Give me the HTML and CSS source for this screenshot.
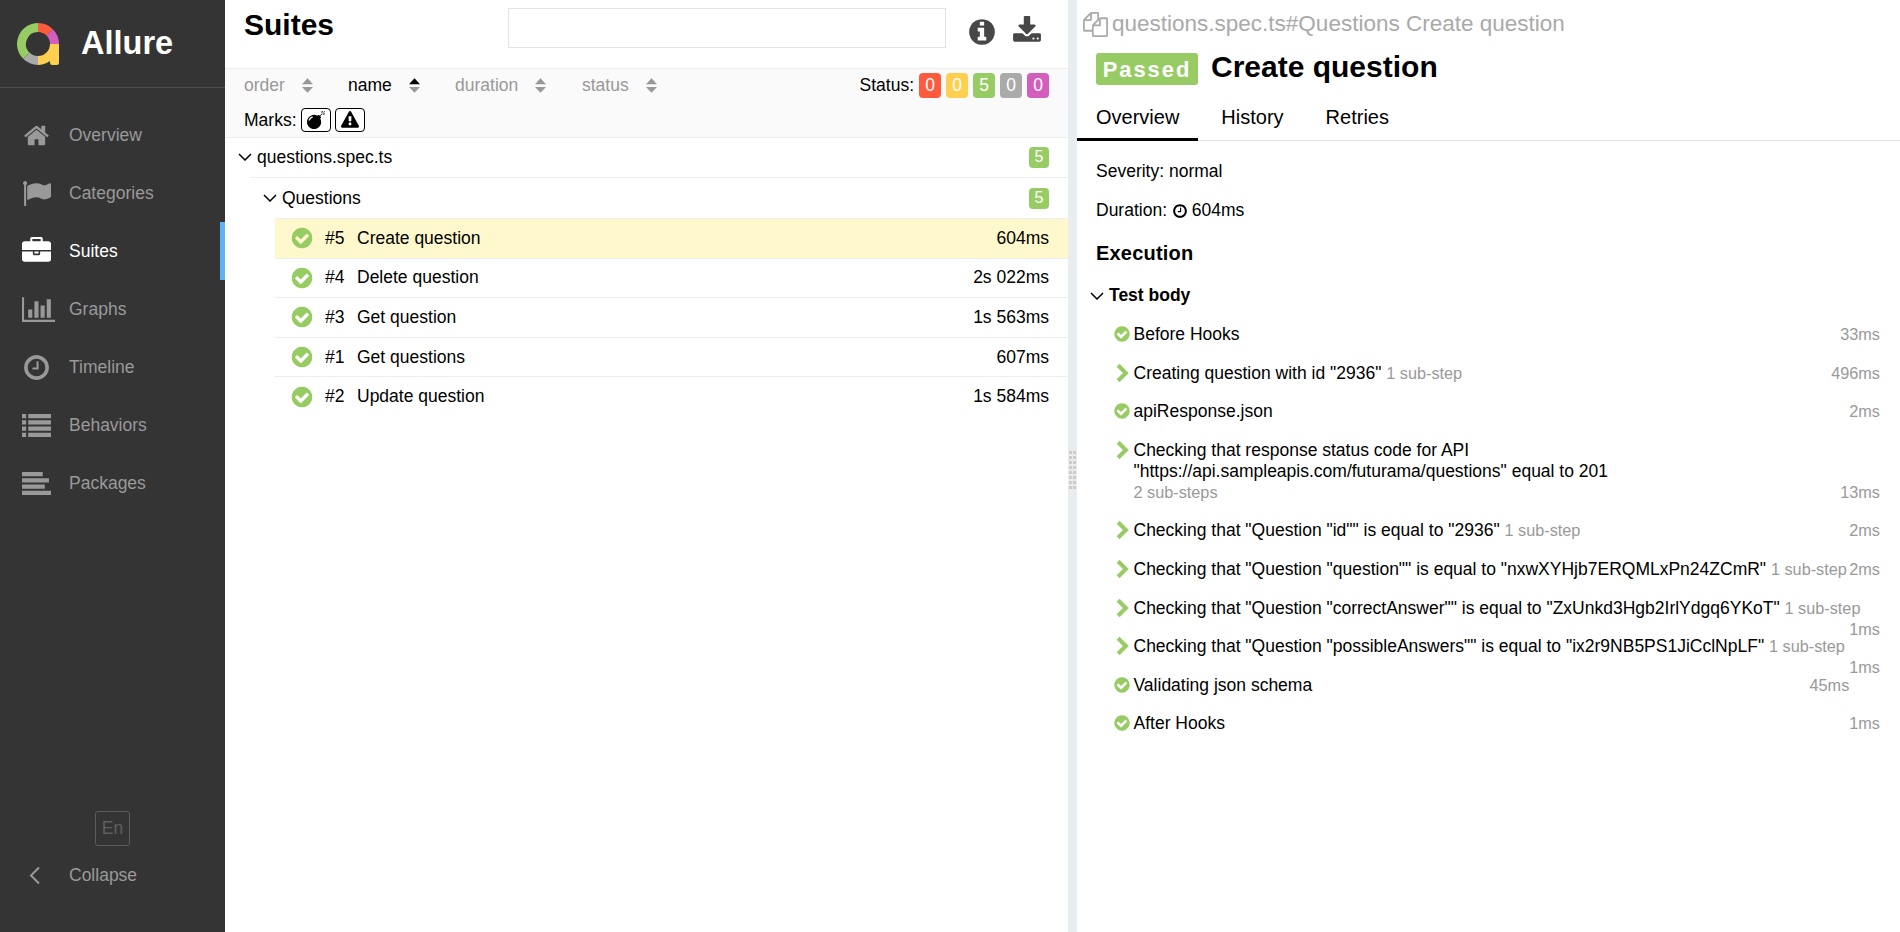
FILE: index.html
```html
<!DOCTYPE html>
<html lang="en">
<head>
    <meta charset="UTF-8">
    <title>Allure Report</title>
    <link rel="stylesheet" href="styles.css">
</head>
<body>
    <svg class="defs">
        <symbol id="i-check" viewBox="0 0 1792 1792"><path d="M1412 734q0-28-18-46l-91-90q-19-19-45-19t-45 19l-408 407-226-226q-19-19-45-19t-45 19l-91 90q-18 18-18 46 0 27 18 45l362 362q19 19 45 19 27 0 46-19l543-543q18-18 18-45zm252 162q0 209-103 385.500t-279.500 279.500-385.500 103-385.500-103-279.500-279.500-103-385.500 103-385.500 279.500-279.500 385.500-103 385.500 103 279.500 279.500 103 385.500z"/></symbol>
        <symbol id="i-clock" viewBox="0 0 1792 1792"><path d="M1024 544v448q0 14-9 23t-23 9h-320q-14 0-23-9t-9-23v-64q0-14 9-23t23-9h224v-352q0-14 9-23t23-9h64q14 0 23 9t9 23zm416 352q0-148-73-273t-198-198-273-73-273 73-198 198-73 273 73 273 198 198 273 73 273-73 198-198 73-273zm224 0q0 209-103 385.500t-279.500 279.500-385.500 103-385.500-103-279.500-279.500-103-385.500 103-385.500 279.500-279.500 385.500-103 385.500 103 279.500 279.500 103 385.500z"/></symbol>
        <symbol id="i-down" viewBox="0 0 14 8"><path d="M1 1l6 6 6-6" fill="none" stroke="#000" stroke-width="1.5"/></symbol>
        <symbol id="i-right" viewBox="0 0 12 18"><path d="M2.500 2l7 7-7 7" fill="none" stroke="#97cc64" stroke-width="3.600"/></symbol>
    </svg>

    <div class="app">
        <aside class="side">
            <div class="brand">
                <svg class="logo" viewBox="0 0 42 42" fill="none" stroke-width="9">
                    <rect x="33" y="21" width="9" height="21" rx="2.500" fill="#ffd050"/>
                    <path d="M21 4.500A16.500 16.500 0 0 1 32.670 9.330" stroke="#fd5a3e"/>
                    <path d="M32.670 9.330A16.500 16.500 0 0 1 37.500 21" stroke="#d35ebe"/>
                    <path d="M37.500 21A16.500 16.500 0 0 1 21 37.500" stroke="#ffd050"/>
                    <path d="M21 37.500A16.500 16.500 0 0 1 9.330 32.670" stroke="#aaa"/>
                    <path d="M9.330 32.670A16.500 16.500 0 0 1 21 4.500" stroke="#97cc64"/>
                </svg>
                <span class="brand-name">Allure</span>
            </div>
            <nav class="menu">
                <a class="menu-item">
                    <span class="menu-icon"><svg class="home" viewBox="0 0 1792 1792"><path d="M1472 992v480q0 26-19 45t-45 19h-384v-384h-256v384h-384q-26 0-45-19t-19-45v-480q0-1 .5-3t.5-3l575-474 575 474q1 2 1 6zm223-69l-62 74q-8 9-21 11h-3q-13 0-21-7l-692-577-692 577q-12 8-24 7-13-2-21-11l-62-74q-8-10-7-23.500t11-21.500l719-599q32-26 76-26t76 26l244 204v-195q0-14 9-23t23-9h192q14 0 23 9t9 23v408l219 182q10 8 11 21.500t-7 23.500z"/></svg></span>
                    Overview
                </a>
                <a class="menu-item">
                    <span class="menu-icon"><svg viewBox="0 0 1792 1792"><path d="M320 256q0 72-64 110v1266q0 13-9.500 22.500t-22.500 9.500h-64q-13 0-22.500-9.500t-9.500-22.500v-1266q-64-38-64-110 0-53 37.500-90.500t90.500-37.500 90.500 37.500 37.500 90.500zm1472 64v763q0 25-12.500 38.500t-39.500 27.500q-215 116-369 116-61 0-123.500-22t-108.500-48-115.500-48-142.500-22q-192 0-464 146-17 9-33 9-26 0-45-19t-19-45v-742q0-32 31-55 21-14 79-43 236-120 421-120 107 0 200 29t219 88q38 19 88 19 54 0 117.500-21t110-47 88-47 54.500-21q26 0 45 19t19 45z"/></svg></span>
                    Categories
                </a>
                <a class="menu-item active">
                    <span class="menu-icon"><svg viewBox="0 0 1792 1792"><path d="M640 256h512v-128h-512v128zm1152 640v480q0 66-47 113t-113 47h-1472q-66 0-113-47t-47-113v-480h672v160q0 26 19 45t45 19h320q26 0 45-19t19-45v-160h672zm-768 0v128h-256v-128h256zm768-480v384h-1792v-384q0-66 47-113t113-47h352v-160q0-40 28-68t68-28h576q40 0 68 28t28 68v160h352q66 0 113 47t47 113z"/></svg></span>
                    Suites
                </a>
                <a class="menu-item">
                    <span class="menu-icon"><svg viewBox="0 0 2048 1792" class="wide"><path d="M640 896v512h-256v-512h256zm384-512v1024h-256v-1024h256zm1024 1152v128h-2048v-1536h128v1408h1920zm-640-896v768h-256v-768h256zm384-384v1152h-256v-1152h256z"/></svg></span>
                    Graphs
                </a>
                <a class="menu-item">
                    <span class="menu-icon"><svg viewBox="0 0 1792 1792"><use href="#i-clock"/></svg></span>
                    Timeline
                </a>
                <a class="menu-item">
                    <span class="menu-icon"><svg viewBox="0 0 1792 1792"><path d="M0 256h256v256H0zM384 256h1408v256H384zM0 640h256v256H0zM384 640h1408v256H384zM0 1024h256v256H0zM384 1024h1408v256H384zM0 1408h256v256H0zM384 1408h1408v256H384z" transform="translate(0 -64)"/></svg></span>
                    Behaviors
                </a>
                <a class="menu-item">
                    <span class="menu-icon"><svg viewBox="0 0 1792 1792"><path d="M0 192h1280v256H0zM0 576h1664v256H0zM0 960h1408v256H0zM0 1344h1792v256H0z"/></svg></span>
                    Packages
                </a>
            </nav>
            <div class="lang"><span class="lang-box">En</span></div>
            <a class="menu-item collapse">
                <span class="menu-icon"><svg viewBox="0 0 29 29"><path d="M17 6.500l-8 8 8 8" fill="none" stroke="#999" stroke-width="2"/></svg></span>
                Collapse
            </a>
        </aside>

        <main class="suites">
            <header class="suites-head">
                <h2 class="suites-title">Suites</h2>
                <input class="search" type="text">
                <svg class="tool info" viewBox="0 0 1792 1792"><path d="M1152 1376v-160q0-14-9-23t-23-9h-96v-512q0-14-9-23t-23-9h-320q-14 0-23 9t-9 23v160q0 14 9 23t23 9h96v320h-96q-14 0-23 9t-9 23v160q0 14 9 23t23 9h448q14 0 23-9t9-23zm-128-896v-160q0-14-9-23t-23-9h-192q-14 0-23 9t-9 23v160q0 14 9 23t23 9h192q14 0 23-9t9-23zm640 416q0 209-103 385.500t-279.500 279.500-385.500 103-385.500-103-279.500-279.500-103-385.500 103-385.500 279.500-279.500 385.500-103 385.500 103 279.500 279.500 103 385.500z"/></svg>
                <svg class="tool download" viewBox="0 0 1792 1792"><path d="M1344 1344q0-26-19-45t-45-19-45 19-19 45 19 45 45 19 45-19 19-45zm256 0q0-26-19-45t-45-19-45 19-19 45 19 45 45 19 45-19 19-45zm128-224v320q0 40-28 68t-68 28h-1472q-40 0-68-28t-28-68v-320q0-40 28-68t68-28h465l135 136q58 56 136 56t136-56l136-136h464q40 0 68 28t28 68zm-325-569q17 41-14 70l-448 448q-18 19-45 19t-45-19l-448-448q-31-29-14-70 17-39 59-39h256v-448q0-26 19-45t45-19h256q26 0 45 19t19 45v448h256q42 0 59 39z"/></svg>
            </header>

            <div class="filters">
                <div class="filter-row">
                    <span class="sorter">order <svg class="sort-icon" viewBox="0 0 12 16"><path d="M6 0l6 6.500H0zM6 16l6-6.500H0z"/></svg></span>
                    <span class="sorter on">name <svg class="sort-icon" viewBox="0 0 12 16"><path d="M6 0l6 6.500H0z" fill="#000"/><path d="M6 16l6-6.500H0z"/></svg></span>
                    <span class="sorter">duration <svg class="sort-icon" viewBox="0 0 12 16"><path d="M6 0l6 6.500H0zM6 16l6-6.500H0z"/></svg></span>
                    <span class="sorter">status <svg class="sort-icon" viewBox="0 0 12 16"><path d="M6 0l6 6.500H0zM6 16l6-6.500H0z"/></svg></span>
                    <span class="status-label">Status:</span>
                    <span class="count failed">0</span>
                    <span class="count broken">0</span>
                    <span class="count passed">5</span>
                    <span class="count skipped">0</span>
                    <span class="count unknown">0</span>
                </div>
                <div class="marks">
                    Marks:
                    <span class="mark"><svg viewBox="0 0 1792 1792"><path d="M571 589q-10-25-34-35t-49 0q-108 44-191 127t-127 191q-10 25 0 49t35 34q13 5 24 5 42 0 60-40 34-84 98.500-148.500t148.500-98.500q25-11 35-35t0-49zm942-356l46 46-244 243 68 68q19 19 19 45.500t-19 45.500l-64 64q89 161 89 343 0 143-55.500 273.500t-150 225-225 150-273.500 55.500-273.500-55.500-225-150-150-225-55.500-273.500 55.500-273.500 150-225 225-150 273.500-55.500q182 0 343 89l64-64q19-19 45.500-19t45.500 19l68 68zm8-56q-10 10-22 10-13 0-23-10l-91-90q-9-10-9-23t9-23q10-9 23-9t23 9l90 91q10 9 10 22.500t-10 22.500zm230 230q-11 9-23 9t-23-9l-90-91q-10-9-10-22.500t10-22.500q9-10 22.500-10t22.500 10l91 90q9 10 9 23t-9 23zm41-183q0 14-9 23t-23 9h-96q-14 0-23-9t-9-23 9-23 23-9h96q14 0 23 9t9 23zm-228-228v96q0 14-9 23t-23 9-23-9-9-23v-96q0-14 9-23t23-9 23 9 9 23zm222 69l-91 90q-10 10-22 10-13 0-23-10-10-9-10-22.500t10-22.500l90-91q10-9 22.500-9t23.500 9q9 10 9 23t-9 23z"/></svg></span>
                    <span class="mark"><svg viewBox="0 0 1792 1792"><path d="M1024 1375v-190q0-14-9.500-23.500t-22.500-9.500h-192q-13 0-22.500 9.500t-9.500 23.500v190q0 14 9.500 23.500t22.500 9.500h192q13 0 22.500-9.500t9.500-23.500zm-2-374l18-459q0-12-10-19-13-11-24-11h-220q-11 0-24 11-10 7-10 21l17 457q0 10 10 16.500t24 6.500h185q14 0 23.500-6.500t10.500-16.500zm-14-934l768 1408q35 63-2 126-17 29-46.500 46t-63.500 17h-1536q-34 0-63.500-17t-46.500-46q-37-63-2-126l768-1408q17-31 47-49t65-18 65 18 47 49z"/></svg></span>
                </div>
            </div>

            <div class="tree">
                <div class="group top">
                    <svg class="caret"><use href="#i-down"/></svg>
                    <span class="group-name">questions.spec.ts</span>
                    <span class="count passed small">5</span>
                </div>
                <div class="group inner">
                    <svg class="caret"><use href="#i-down"/></svg>
                    <span class="group-name">Questions</span>
                    <span class="count passed small">5</span>
                </div>
                <div class="leaf selected">
                    <svg class="leaf-check"><use href="#i-check"/></svg>
                    <span class="leaf-num">#5</span>
                    <span class="leaf-name">Create question</span>
                    <span>604ms</span>
                </div>
                <div class="leaf">
                    <svg class="leaf-check"><use href="#i-check"/></svg>
                    <span class="leaf-num">#4</span>
                    <span class="leaf-name">Delete question</span>
                    <span>2s 022ms</span>
                </div>
                <div class="leaf">
                    <svg class="leaf-check"><use href="#i-check"/></svg>
                    <span class="leaf-num">#3</span>
                    <span class="leaf-name">Get question</span>
                    <span>1s 563ms</span>
                </div>
                <div class="leaf">
                    <svg class="leaf-check"><use href="#i-check"/></svg>
                    <span class="leaf-num">#1</span>
                    <span class="leaf-name">Get questions</span>
                    <span>607ms</span>
                </div>
                <div class="leaf">
                    <svg class="leaf-check"><use href="#i-check"/></svg>
                    <span class="leaf-num">#2</span>
                    <span class="leaf-name">Update question</span>
                    <span>1s 584ms</span>
                </div>
            </div>
        </main>

        <div class="gutter"><span class="grip"></span></div>

        <section class="detail">
            <div class="crumb">
                <svg class="crumb-icon" viewBox="0 0 1792 1792"><path d="M1696 384q40 0 68 28t28 68v1216q0 40-28 68t-68 28h-960q-40 0-68-28t-28-68v-288h-544q-40 0-68-28t-28-68v-672q0-40 20-88t48-76l408-408q28-28 76-48t88-20h416q40 0 68 28t28 68v328q68-40 128-40h416zm-544 213l-299 299h299v-299zm-640-384l-299 299h299v-299zm196 647l316-316v-416h-384v416q0 40-28 68t-68 28h-416v640h512v-256q0-40 20-88t48-76zm956 804v-1152h-384v416q0 40-28 68t-68 28h-416v640h896z"/></svg>
                questions.spec.ts#Questions Create question
            </div>
            <div class="title-row">
                <span class="status-pill">Passed</span>
                <h2 class="test-name">Create question</h2>
            </div>
            <div class="tabs">
                <a class="tab current">Overview</a>
                <a class="tab">History</a>
                <a class="tab">Retries</a>
            </div>
            <p class="meta first">Severity: normal</p>
            <p class="meta">Duration: <svg class="meta-clock"><use href="#i-clock"/></svg> 604ms</p>
            <h3 class="exec">Execution</h3>
            <div class="stage"><svg class="caret"><use href="#i-down"/></svg>Test body</div>

            <div class="step"><svg class="ic ok"><use href="#i-check"/></svg>Before Hooks<span class="time">33ms</span></div>
            <div class="step"><svg class="ic go"><use href="#i-right"/></svg>Creating question with id "2936" <span class="sub">1 sub-step</span><span class="time">496ms</span></div>
            <div class="step"><svg class="ic ok"><use href="#i-check"/></svg>apiResponse.json<span class="time">2ms</span></div>
            <div class="step"><svg class="ic go"><use href="#i-right"/></svg>Checking that response status code for API<br>"https://api.sampleapis.com/futurama/questions" equal to 201<br><span class="sub">2 sub-steps</span><span class="time">13ms</span></div>
            <div class="step"><svg class="ic go"><use href="#i-right"/></svg>Checking that "Question "id"" is equal to "2936" <span class="sub">1 sub-step</span><span class="time">2ms</span></div>
            <div class="step"><svg class="ic go"><use href="#i-right"/></svg>Checking that "Question "question"" is equal to "nxwXYHjb7ERQMLxPn24ZCmR" <span class="sub">1 sub-step</span><span class="time">2ms</span></div>
            <div class="step"><svg class="ic go"><use href="#i-right"/></svg>Checking that "Question "correctAnswer"" is equal to "ZxUnkd3Hgb2IrlYdgq6YKoT" <span class="sub">1 sub-step</span><span class="time">1ms</span></div>
            <div class="step"><svg class="ic go"><use href="#i-right"/></svg>Checking that "Question "possibleAnswers"" is equal to "ix2r9NB5PS1JiCclNpLF" <span class="sub">1 sub-step</span><span class="time">1ms</span></div>
            <div class="step"><svg class="ic ok"><use href="#i-check"/></svg>Validating json schema<span class="time">45ms</span></div>
            <div class="step"><svg class="ic ok"><use href="#i-check"/></svg>After Hooks<span class="time">1ms</span></div>
        </section>
    </div>
</body>
</html>
```

FILE: styles.css
```css
* {
    box-sizing: border-box;
}
html, body {
    height: 100%;
}
body {
    margin: 0;
    font-family: "Liberation Sans", Arial, sans-serif;
    font-size: 17.5px;
    color: #000;
    overflow: hidden;
}
.defs {
    display: none;
}
.app {
    display: flex;
    height: 100%;
}

/* sidebar */
.side {
    width: 225px;
    flex: none;
    display: flex;
    flex-direction: column;
    background: #343434;
    color: #999;
    padding-bottom: 28px;
}
.brand {
    height: 88px;
    flex: none;
    display: flex;
    align-items: center;
    padding-left: 17px;
    border-bottom: 1px solid #4d4d4d;
}
.logo {
    width: 42px;
    height: 42px;
}
.brand-name {
    margin-left: 22px;
    font-size: 32.5px;
    font-weight: bold;
    color: #fff;
}
.menu {
    flex: 1;
    padding-top: 18px;
}
.menu-item {
    display: flex;
    align-items: center;
    height: 58px;
    padding-left: 22px;
    color: #999;
}
.menu-item.active {
    color: #fff;
    border-right: 5px solid #5eb3f6;
}
.menu-icon {
    width: 47px;
    flex: none;
    display: flex;
    align-items: center;
}
.menu-icon svg {
    width: 29px;
    height: 29px;
    fill: #999;
}
.menu-icon svg.wide {
    width: 33px;
}
.menu-icon svg.home {
    width: 27px;
    height: 27px;
    margin-left: 1px;
}
.active .menu-icon svg {
    fill: #fff;
}
.lang {
    display: flex;
    justify-content: center;
}
.lang-box {
    width: 35px;
    height: 35px;
    display: flex;
    align-items: center;
    justify-content: center;
    border: 1px solid #5b5b5b;
    border-radius: 3px;
    color: #5f5f5f;
}

/* left pane */
.suites {
    width: 843px;
    flex: none;
}
.suites-head {
    height: 68px;
    display: flex;
    align-items: flex-start;
    padding-left: 19px;
}
.suites-title {
    margin: 0;
    width: 264px;
    font-size: 30px;
    line-height: 50px;
}
.search {
    width: 438px;
    height: 40px;
    margin-top: 8px;
    border: 1.5px solid #e4e4e4;
    background: #fff;
}
.tool {
    width: 30px;
    height: 30px;
    fill: #474747;
}
.info {
    margin: 17px 0 0 21px;
}
.download {
    margin: 16px 0 0 15px;
}
.filters {
    height: 70px;
    padding: 0 19px;
    background: #fafafa;
    border-top: 1px solid #eee;
    border-bottom: 1px solid #eee;
}
.filter-row {
    display: flex;
    align-items: center;
    height: 33px;
}
.sorter {
    display: flex;
    align-items: center;
    color: #999;
}
.sorter.on {
    color: #000;
}
.sort-icon {
    width: 11px;
    height: 15px;
    margin-left: 17px;
    fill: #999;
}
.sorter:nth-child(1) {
    width: 104px;
}
.sorter:nth-child(2) {
    width: 107px;
}
.sorter:nth-child(3) {
    width: 127px;
}
.status-label {
    margin-left: auto;
    margin-right: 5px;
}
.count {
    width: 22px;
    height: 25px;
    margin-left: 5px;
    display: flex;
    align-items: center;
    justify-content: center;
    border-radius: 4px;
    color: #fff;
}
.status-label + .count {
    margin-left: 0;
}
.failed {
    background: #fd5a3e;
}
.broken {
    background: #ffd050;
}
.passed {
    background: #97cc64;
}
.skipped {
    background: #aaa;
}
.unknown {
    background: #d35ebe;
}
.marks {
    display: flex;
    align-items: center;
    height: 30px;
    margin-top: 3px;
}
.mark {
    width: 30px;
    height: 24px;
    margin-left: 4px;
    display: flex;
    align-items: center;
    justify-content: center;
    border: 1px solid #000;
    border-radius: 4px;
    background: #fff;
}
.mark svg {
    width: 18px;
    height: 18px;
}

/* tree */
.group {
    display: flex;
    align-items: center;
    height: 40px;
    padding: 0 19px 0 13px;
}
.group.top {
    padding-bottom: 2px;
    background: linear-gradient(#eee, #eee) no-repeat 25px 100% / 100% 1px;
}
.group.inner {
    margin-left: 25px;
}
.caret {
    width: 14px;
    height: 8px;
    flex: none;
    margin-right: 5px;
}
.group-name {
    flex: 1;
}
.count.small {
    width: 20px;
    height: 21px;
    margin: 0;
    font-size: 16px;
}
.leaf {
    display: flex;
    align-items: center;
    height: 39.6px;
    margin-left: 50px;
    padding: 0 19px 0 15px;
    border-top: 1px solid #eee;
}
.leaf.selected {
    background: #fff8cc;
}
.leaf-check {
    width: 24px;
    height: 24px;
    fill: #97cc64;
}
.leaf-num {
    width: 32px;
    margin-left: 11px;
}
.leaf-name {
    flex: 1;
}

/* right pane */
.gutter {
    width: 9px;
    flex: none;
    display: flex;
    align-items: center;
    justify-content: center;
    padding-top: 8px;
    background: #e9edf0;
}
.grip {
    width: 7px;
    height: 38px;
    background-image: radial-gradient(circle at 1.5px 1.5px, #ccc 1.5px, transparent 2px);
    background-size: 4px 5px;
}
.detail {
    flex: 1;
    min-width: 0;
}
.crumb {
    display: flex;
    align-items: center;
    height: 48px;
    padding-left: 6px;
    font-size: 22.5px;
    color: #aaa;
}
.crumb-icon {
    width: 25px;
    height: 25px;
    margin-right: 4px;
    fill: #aaa;
}
.title-row {
    display: flex;
    align-items: center;
    height: 42px;
    padding-left: 19px;
}
.status-pill {
    width: 102px;
    height: 32px;
    padding-top: 1px;
    display: flex;
    align-items: center;
    justify-content: center;
    border-radius: 3px;
    background: #97cc64;
    color: #fff;
    font-size: 21.9px;
    font-weight: bold;
    letter-spacing: 2px;
}
.test-name {
    margin: 0 0 4px 13px;
    font-size: 30px;
}
.tabs {
    display: flex;
    height: 51px;
    border-bottom: 1px solid #e4e4e4;
}
.tab {
    height: 51px;
    padding: 0 19px;
    margin-right: 4px;
    font-size: 20px;
    line-height: 54px;
}
.tab.current {
    border-bottom: 3px solid #000;
}
.meta {
    margin: 0;
    height: 39px;
    line-height: 39px;
    padding-left: 19px;
}
.meta.first {
    margin-top: 11px;
}
.meta-clock {
    width: 16px;
    height: 16px;
    margin-right: -1px;
    vertical-align: -3px;
}
.exec {
    margin: 0;
    padding-left: 19px;
    font-size: 20px;
    line-height: 46px;
    letter-spacing: .2px;
}
.stage {
    display: flex;
    align-items: center;
    height: 39px;
    padding-left: 13px;
    font-weight: bold;
}
.stage .caret {
    margin-right: 5px;
}
.step {
    padding: 9px 20px 8.6px 56.5px;
    line-height: 21px;
}
.ic {
    display: inline-block;
    vertical-align: -3px;
}
.ic.ok {
    width: 18px;
    height: 18px;
    margin-left: -20.5px;
    margin-right: 2.5px;
    fill: #97cc64;
}
.ic.go {
    width: 14px;
    height: 20px;
    margin-left: -18.5px;
    margin-right: 4.5px;
    vertical-align: -4px;
}
.sub {
    color: #999;
    font-size: 16.25px;
}
.time {
    float: right;
    color: #999;
    font-size: 16.25px;
}
```
